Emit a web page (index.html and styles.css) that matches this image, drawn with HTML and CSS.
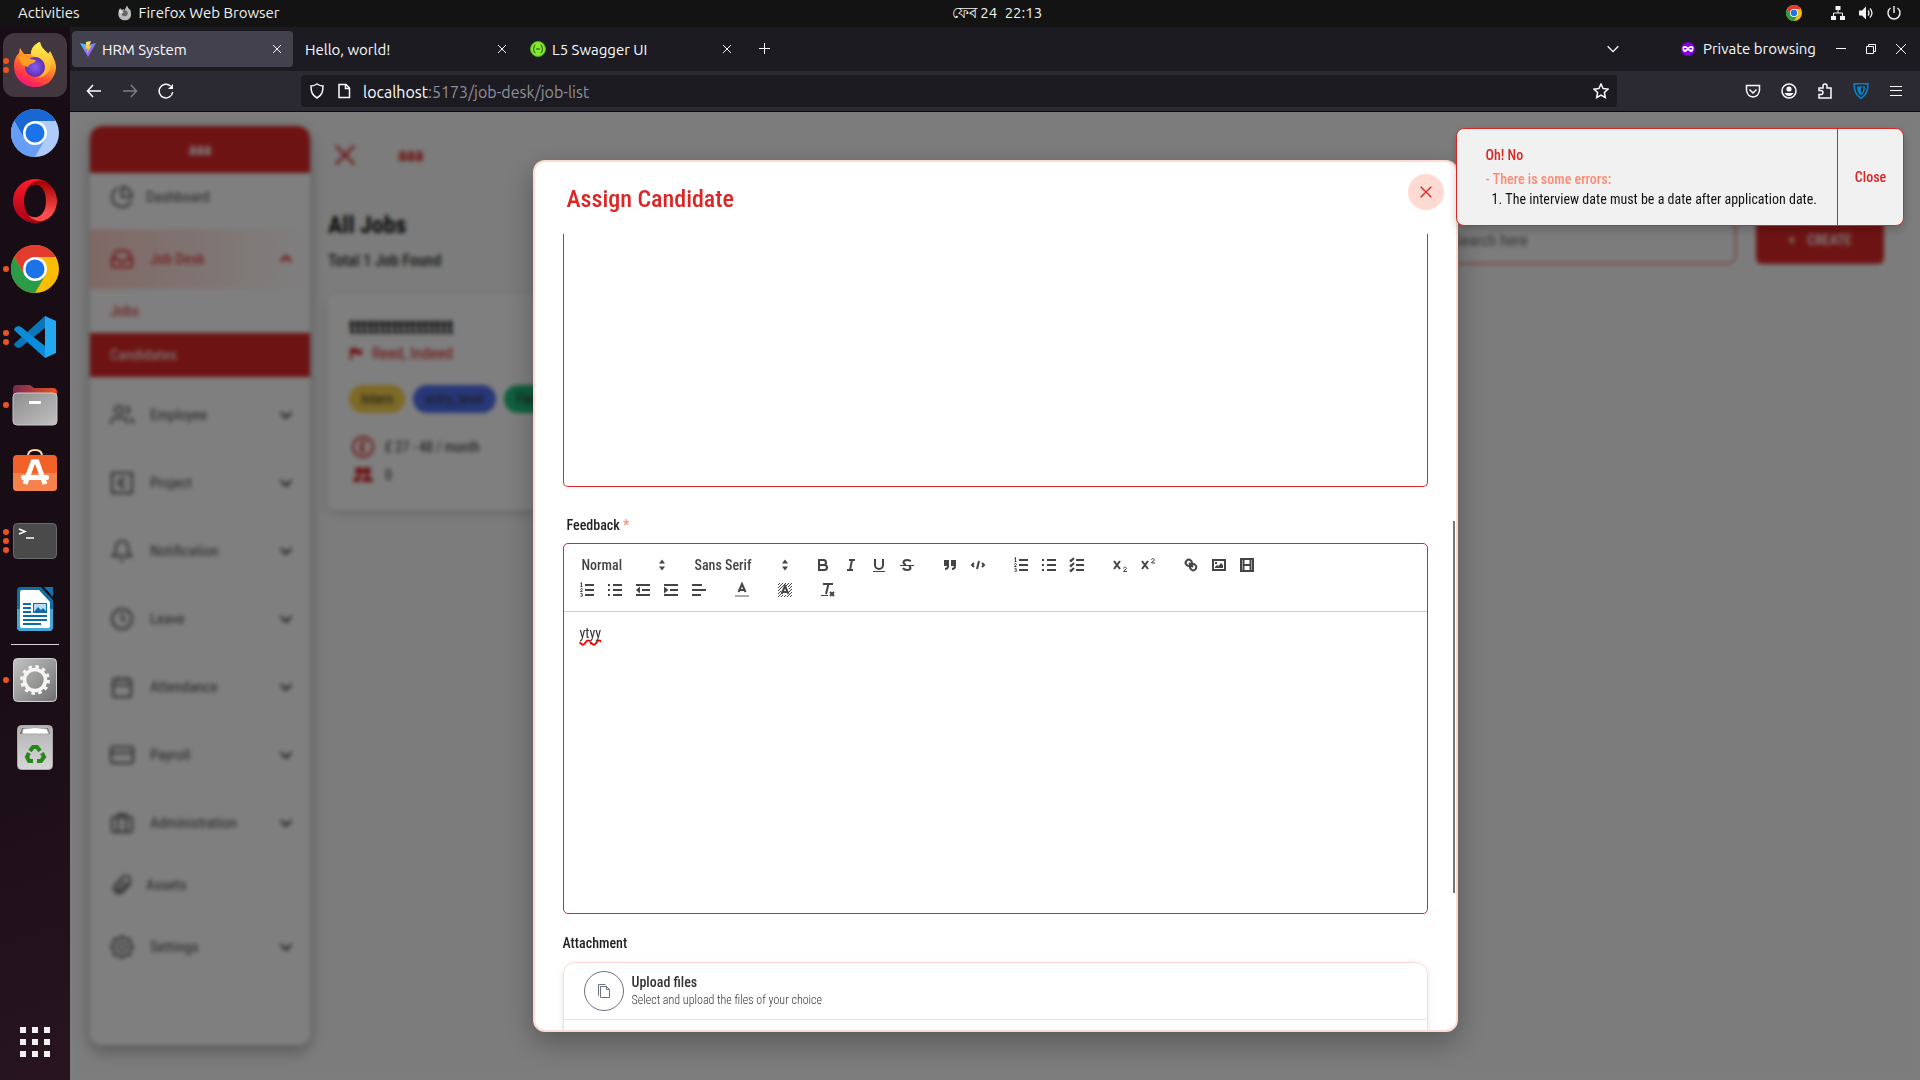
FILE: index.html
```html
<!DOCTYPE html>
<html lang="en">
<head>
<meta charset="utf-8">
<title>HRM System</title>
<meta name="viewport" content="width=device-width, initial-scale=1">
<link rel="stylesheet" href="styles.css">
</head>
<body>
<svg class="defs" aria-hidden="true">
  <defs>
    <linearGradient id="ffBody" x1="0.8" y1="0" x2="0.3" y2="1"><stop offset="0" stop-color="#fff44f"/><stop offset=".35" stop-color="#ffb02e"/><stop offset=".6" stop-color="#ff6a2b"/><stop offset=".85" stop-color="#ff2d52"/><stop offset="1" stop-color="#e31587"/></linearGradient>
    <linearGradient id="ffFlame" x1="0" y1="0" x2="0" y2="1"><stop offset="0" stop-color="#fff150"/><stop offset="1" stop-color="#ffa62a"/></linearGradient>
    <radialGradient id="ffGlobe"><stop offset="0" stop-color="#8a5cf5"/><stop offset="1" stop-color="#5b2fb0"/></radialGradient>
    <linearGradient id="opA" x1="0" y1="0" x2="0" y2="1"><stop offset="0" stop-color="#ff1b2d"/><stop offset="1" stop-color="#a70014"/></linearGradient>
    <linearGradient id="opB" x1="0" y1="0" x2="0" y2="1"><stop offset="0" stop-color="#9c0000"/><stop offset=".8" stop-color="#ff4b4b"/></linearGradient>
    <linearGradient id="folder" x1="0" y1="0" x2="1" y2="1"><stop offset="0" stop-color="#8e8e8e"/><stop offset="1" stop-color="#c0c0c0"/></linearGradient>
    <linearGradient id="folderBack" x1="0" y1="0" x2="1" y2="0"><stop offset="0" stop-color="#772953"/><stop offset="1" stop-color="#e95420"/></linearGradient>
    <linearGradient id="gear" x1="0" y1="0" x2="1" y2="1"><stop offset="0" stop-color="#c4c4c4"/><stop offset="1" stop-color="#707070"/></linearGradient>
    <linearGradient id="trash" x1="0" y1="0" x2="0" y2="1"><stop offset="0" stop-color="#b4b4b4"/><stop offset="1" stop-color="#d6d6d6"/></linearGradient>
    <linearGradient id="viteA" x1="0" y1="0" x2="1" y2="1"><stop offset="0" stop-color="#41d1ff"/><stop offset="1" stop-color="#bd34fe"/></linearGradient>
    <linearGradient id="viteB" x1="0" y1="0" x2="0" y2="1"><stop offset="0" stop-color="#ffea83"/><stop offset="1" stop-color="#ffa800"/></linearGradient>
    <symbol id="i-x" viewBox="0 0 24 24"><path d="M4 4l16 16M20 4L4 20"/></symbol>
    <symbol id="i-down" viewBox="0 0 24 24"><path d="M4 8l8 8 8-8"/></symbol>
    <symbol id="i-chrome" viewBox="0 0 48 48">
      <circle cx="24" cy="24" r="24" fill="#fbbc04"/>
      <path d="M3.2 12A24 24 0 0 1 44.8 12H24L13.6 30z" fill="#e33b2e"/>
      <path d="M3.2 12A24 24 0 0 0 24 48L34.4 30 24 36 13.6 30z" fill="#2a9b48"/>
      <circle cx="24" cy="24" r="12" fill="#fff"/><circle cx="24" cy="24" r="9.500" fill="#1a73e8"/>
    </symbol>
    <symbol id="q-ordered" viewBox="0 0 18 18"><path d="M7 4h9M7 9h9M7 14h9"/><path class="thin" d="M2.500 5.500h2M3.500 5.500v-4l-1 1"/><path class="thin" d="M2.500 8.500c0-1.500 2-1.200 2 0 0 .7-2 1.200-2 2h2M2.500 12.700c.8-.6 2-.3 2 .4 0 .5-.6.7-1 .7.6 0 1.200.3 1.200.9 0 .8-1.400 1-2.200.4"/></symbol>
    <symbol id="q-bullet" viewBox="0 0 18 18"><path d="M7 4h9M7 9h9M7 14h9M2 4h2M2 9h2M2 14h2"/></symbol>
  </defs>
</svg>

<header class="topbar">
  <div class="topbar-left">
    <button class="plain">Activities</button>
    <button class="plain app-name">
      <svg width="16" height="16" viewBox="0 0 44 48"><path d="M22 46C9 46 1 36 2 24c.5-5 2-8 4-10l1-5 5 5 7-1 2 4c2-8 4-12 8-15 1 5 4 8 7 12 2-2 3 4 4 10C42 37 34 46 22 46z" fill="#bbb"/><circle cx="21" cy="25" r="9" fill="#666"/><path d="M3 13q8 3 15 9-7 7-12 3z" fill="#ddd"/></svg>
      Firefox Web Browser
    </button>
  </div>
  <time class="clock">ফেব 24&ensp;22:13</time>
  <div class="tray">
    <svg class="tray-chrome" width="16" height="16"><use href="#i-chrome"/></svg>
    <svg width="16" height="16" viewBox="0 0 16 16" fill="#f2f2f2"><path d="M5.500 1h5v4h-5zM1 11h5v4H1zM10 11h5v4h-5z"/><path d="M8 5v3M3.500 11V8h9v3" fill="none" stroke="#f2f2f2"/></svg>
    <svg width="16" height="16" viewBox="0 0 16 16" fill="#f2f2f2"><path d="M1 5.500h3l4-4v13l-4-4H1z"/><path d="M10 5.500q2 2.500 0 5M12 3.500q4 4.500 0 9" fill="none" stroke="#f2f2f2" stroke-width="1.300"/></svg>
    <svg width="16" height="16" viewBox="0 0 16 16" fill="none" stroke="#f2f2f2" stroke-width="1.400"><path d="M8 1v7M4.600 3a6 6 0 1 0 6.800 0"/></svg>
  </div>
</header>

<div class="desktop">
  <nav class="dock" aria-label="Dock">
    <button class="dock-item active" aria-label="Firefox"><span class="dots"><i></i><i></i></span>
      <svg width="44" height="46" viewBox="0 0 44 46"><path d="M22 45C9 45 1 35 1 24 1 18 3 14 6 11l1-5 4 6 7 0c0-6 4-10 9-12 1 6 4 9 8 12l2-3c4 7 6 12 6 17-1 11-9 19-21 19z" fill="url(#ffBody)"/><path d="M27 0c1 7 8 9 10 15 4 13-4 20-12 21 9-7 7-15 2-19-5-3-7-2-9-5 0-6 4-10 9-12z" fill="url(#ffFlame)"/><circle cx="22" cy="25" r="10" fill="url(#ffGlobe)"/><path d="M6 14q7-2 11 3l6 1c-1 4-7 3-8 7-5-1-9-4-9-11z" fill="#ff9f22"/></svg>
    </button>
    <button class="dock-item" aria-label="Chromium">
      <svg width="48" height="48" viewBox="0 0 48 48"><circle cx="24" cy="24" r="24" fill="#aecbfa"/><path d="M3.200 12A24 24 0 0 1 44.800 12H24L13.600 30z" fill="#1967d2"/><path d="M3.200 12A24 24 0 0 0 24 48L34.400 30 24 36 13.600 30z" fill="#669df6"/><circle cx="24" cy="24" r="12" fill="#fff"/><circle cx="24" cy="24" r="9.500" fill="#1a73e8"/></svg>
    </button>
    <button class="dock-item" aria-label="Opera">
      <svg width="44" height="44" viewBox="0 0 44 44"><path d="M22 0a22 22 0 1 0 0 44 22 22 0 0 0 14-5c-12 7-25-1-25-17S24-2 36 5A22 22 0 0 0 22 0z" fill="url(#opA)"/><path d="M15 8c6-8 14-8 21-3a22 22 0 0 1 0 34c-7 5-15 4-21-3 10 6 18-1 18-14S25 2 15 8z" fill="url(#opB)"/></svg>
    </button>
    <button class="dock-item" aria-label="Chrome"><span class="dots"><i></i></span>
      <svg width="48" height="48"><use href="#i-chrome"/></svg>
    </button>
    <button class="dock-item" aria-label="Visual Studio Code"><span class="dots"><i></i><i></i></span>
      <svg width="42" height="42" viewBox="0 0 42 42"><path d="M31 0L1 27q-2 2 1 4l2 1q1 0 3-1L31 12z" fill="#0876b9"/><path d="M31 42L1 15q-2-2 1-4l2-1q1 0 3 1l24 19z" fill="#0b8bd9"/><path d="M31 0l11 5v32l-11 5z" fill="#25a8f2"/></svg>
    </button>
    <button class="dock-item" aria-label="Files"><span class="dots"><i></i></span>
      <svg width="46" height="42" viewBox="0 0 46 42"><path d="M1 5q0-4 4-4h13l4 3h19q4 0 4 4v8H1z" fill="url(#folderBack)"/><rect x="1" y="9" width="44" height="32" rx="4" fill="url(#folder)" stroke="#c9c9c9"/><rect x="17" y="17" width="12" height="3" rx="1" fill="#fff"/></svg>
    </button>
    <button class="dock-item" aria-label="Ubuntu Software">
      <svg width="44" height="48" viewBox="0 1 44 48"><path d="M15 10V8q0-6 7-6t7 6v2" fill="none" stroke="#f7dca8" stroke-width="2"/><rect y="7" width="44" height="36" rx="4" fill="#f26128"/><path d="M0 25h44v14q0 4-4 4H4q-4 0-4-4z" fill="#f5824d"/><path d="M12 36l8-22h4l8 22" fill="none" stroke="#fff" stroke-width="5"/><rect x="8" y="27" width="28" height="5" rx="2" fill="#fff"/></svg>
    </button>
    <button class="dock-item" aria-label="Terminal"><span class="dots"><i></i><i></i><i></i></span>
      <svg width="44" height="36" viewBox="0 0 44 36"><rect x=".5" y=".5" width="43" height="35" rx="4" fill="#4a4a4a" stroke="#6b6b6b"/><path d="M6 6l6 2.500L6 11M13 15h8" fill="none" stroke="#fff" stroke-width="1.600"/></svg>
    </button>
    <button class="dock-item" aria-label="LibreOffice Writer">
      <svg width="36" height="44" viewBox="0 0 36 44"><path d="M4 0h20l12 13v27q0 4-4 4H4q-4 0-4-4V4q0-4 4-4z" fill="#0e6ea6"/><path d="M0 22h36v18q0 4-4 4H4q-4 0-4-4z" fill="#45a7d8"/><path d="M5 3h17l11 12v24q0 2-2 2H5q-2 0-2-2V5q0-2 2-2z" fill="#fff"/><path d="M27 0h9v10z" fill="#1175ae"/><path d="M6 17h8M6 21h8M6 25h8M6 29h24M6 33h24M6 37h18" stroke="#0b6cab" stroke-width="2"/><rect x="16.500" y="16.500" width="13" height="9" fill="#b8dcf2" stroke="#0b6cab"/><path d="M17 25l4-5 3 3 2-2 4 4z" fill="#0b6cab"/></svg>
    </button>
    <hr class="dock-rule">
    <button class="dock-item" aria-label="Settings"><span class="dots"><i></i></span>
      <svg width="44" height="44" viewBox="0 0 44 44"><rect x=".5" y=".5" width="43" height="43" rx="4" fill="url(#gear)" stroke="#d2d2d2"/><circle cx="22" cy="22" r="10.500" fill="none" stroke="#f5f5f2" stroke-width="3.600"/><circle cx="22" cy="22" r="13.400" fill="none" stroke="#f5f5f2" stroke-width="3" stroke-dasharray="3.500 3.515"/></svg>
    </button>
    <button class="dock-item" aria-label="Trash">
      <svg width="36" height="46" viewBox="0 0 36 46"><rect x=".5" y=".5" width="35" height="44" rx="4" fill="url(#trash)" stroke="#a8a8a8"/><path d="M3 9l2-6h26l2 6z" fill="#666"/><path d="M5 9l1-5q12-3 24 0l2 5z" fill="#fff" stroke="#aaa"/><g fill="none" stroke="#26871d" stroke-width="4"><path d="M13 26l3-4h4l3 4"/><path d="M25 28l2 4-3 4h-4"/><path d="M16 36h-4l-2-4 2-4"/></g></svg>
    </button>
    <button class="dock-item apps" aria-label="Show applications">
      <svg width="30" height="30" viewBox="0 0 30 30" fill="#f2f2f2"><path d="M0 0h6v6H0zM12 0h6v6h-6zM24 0h6v6h-6zM0 12h6v6H0zM12 12h6v6h-6zM24 12h6v6h-6zM0 24h6v6H0zM12 24h6v6h-6zM24 24h6v6h-6z"/></svg>
    </button>
  </nav>

  <div class="browser">
    <div class="tabs">
      <div class="tab current">
        <svg width="16" height="16" viewBox="0 0 16 16"><path d="M0 2l8 14 8-14-8 2z" fill="url(#viteA)"/><path d="M11 0L6 1 5.500 8 7.500 7.500 7 12l4.500-7-2.500.5z" fill="url(#viteB)"/></svg>
        <span class="tab-name">HRM System</span>
        <button class="plain" aria-label="Close tab"><svg class="line" width="12" height="12"><use href="#i-x"/></svg></button>
      </div>
      <div class="tab">
        <span class="tab-name">Hello, world!</span>
        <button class="plain" aria-label="Close tab"><svg class="line" width="12" height="12"><use href="#i-x"/></svg></button>
      </div>
      <div class="tab">
        <svg width="16" height="16" viewBox="0 0 16 16"><circle cx="8" cy="8" r="7.500" fill="#85ea2d" stroke="#4fae1e"/><path d="M5.500 4Q4 4 4 6t-1 2q1 0 1 2t1.500 2M10.500 4Q12 4 12 6t1 2q-1 0-1 2t-1.500 2M6 8h4" fill="none" stroke="#1d4a1a"/></svg>
        <span class="tab-name">L5 Swagger UI</span>
        <button class="plain" aria-label="Close tab"><svg class="line" width="12" height="12"><use href="#i-x"/></svg></button>
      </div>
      <button class="plain new-tab" aria-label="New tab"><svg width="12" height="12" viewBox="0 0 12 12" stroke="#fbfbfe"><path d="M5.500 0v11M0 5.500h11"/></svg></button>
      <div class="window-tools">
        <button class="plain all-tabs" aria-label="List all tabs"><svg class="line" width="16" height="16"><use href="#i-down"/></svg></button>
        <span class="private">
          <svg width="14" height="14" viewBox="0 0 14 14"><circle cx="7" cy="7" r="7" fill="#8000d7"/><path d="M1.500 5q2.500-2 5.500.5Q10 3 12.500 5q.3 5-2.500 5-1.500 0-3-2-1.500 2-3 2Q1.200 10 1.500 5z" fill="#fff"/><path d="M3 6.700h2.500M8.500 6.700H11" stroke="#8000d7" stroke-width="1.500"/></svg>
          Private browsing
        </span>
        <button class="plain" aria-label="Minimize"><svg width="10" height="10" viewBox="0 0 10 10" stroke="#fbfbfe"><path d="M0 4.500h10"/></svg></button>
        <button class="plain" aria-label="Restore"><svg width="10" height="10" viewBox="0 0 10 10" stroke="#fbfbfe" fill="none"><path d="M.5 2.500h7v7h-7zM2.500 2V.5h7v7H8"/></svg></button>
        <button class="plain" aria-label="Close window"><svg width="10" height="10" viewBox="0 0 10 10" stroke="#fbfbfe"><path d="M0 0l10 10M10 0L0 10"/></svg></button>
      </div>
    </div>
    <div class="navbar">
      <div class="nav-group">
        <button class="plain" aria-label="Back"><svg class="nav" viewBox="0 0 16 16"><path d="M15 8H1.500M7 2L1.500 8 7 14"/></svg></button>
        <button class="plain faded" aria-label="Forward"><svg class="nav" viewBox="0 0 16 16"><path d="M1 8h13.500M9 2l5.500 6L9 14"/></svg></button>
        <button class="plain" aria-label="Reload"><svg class="nav" viewBox="0 0 16 16"><path d="M12.500 3A6.800 6.800 0 1 0 14.700 9"/><path d="M15 1v5h-5z" fill="#fbfbfe" stroke="none"/></svg></button>
      </div>
      <div class="urlbar">
        <svg class="nav" viewBox="0 0 16 16"><path d="M8 1q3 2 6 2c0 6-1 9-6 12C3 12 2 9 2 3q3 0 6-2z"/></svg>
        <svg class="nav" viewBox="0 0 16 16"><path d="M3 1.500h7L13.500 5v9.500H3zM9.500 1.500v4h4"/></svg>
        <span class="url"><b>localhost</b>:5173/job-desk/job-list</span>
        <button class="plain" aria-label="Bookmark"><svg class="nav" viewBox="0 0 16 16"><path d="M8 1l2.100 4.500 4.900.6-3.600 3.400.9 5L8 12.100l-4.300 2.400.9-5L1 6.100l4.900-.6z"/></svg></button>
      </div>
      <div class="nav-group tools">
        <button class="plain" aria-label="Pocket"><svg class="nav" viewBox="0 0 16 16"><path d="M1.500 2.500h13v5q-1 6-6.500 6.500-5.500-.5-6.500-6.500zM4.500 6.500L8 10l3.500-3.500"/></svg></button>
        <button class="plain" aria-label="Account"><svg class="nav" viewBox="0 0 16 16"><circle cx="8" cy="8" r="7"/><circle cx="8" cy="6" r="2.600" fill="#fbfbfe" stroke="none"/><path d="M3.500 10h9q-1.500 3-4.500 3t-4.500-3z" fill="#fbfbfe" stroke="none"/></svg></button>
        <button class="plain" aria-label="Extensions"><svg class="nav" viewBox="0 0 16 16"><path d="M2 15V11.500q4 .5 4-2t-4-2V5h4V3q0-2 2-2t2 2v2h4v10z"/></svg></button>
        <button class="plain" aria-label="Shield"><svg width="16" height="16" viewBox="0 0 16 16"><path d="M1 1q7-1 14 0 0 10-7 14.500Q1 11 1 1z" fill="none" stroke="#0a84c8" stroke-width="1.500"/><path d="M4 3.500h8q0 6-4 9-4-3-4-9z" fill="#0a84c8"/><path d="M8 4.500h2.500q0 4-2.500 6z" fill="#1c1b22"/></svg></button>
        <button class="plain" aria-label="Menu"><svg width="14" height="14" viewBox="0 0 14 14" stroke="#fbfbfe"><path d="M1 2.500h12M1 6.500h12M1 11.500h12"/></svg></button>
      </div>
    </div>

    <div class="page">
      <aside class="sidebar">
        <div class="brand">aaa</div>
        <nav class="menu">
          <a class="item single" href="#"><svg viewBox="0 0 24 24"><path d="M21.200 15.900A10 10 0 1 1 8 2.800M22 12A10 10 0 0 0 12 2v10z"/></svg>Dashboard</a>
          <div class="group">
            <a class="item open" href="#"><svg viewBox="0 0 24 24"><path d="M22 12h-6l-2 3h-4l-2-3H2M5.500 5L2 12v6a2 2 0 0 0 2 2h16a2 2 0 0 0 2-2v-6l-3.500-7a2 2 0 0 0-1.800-1H7.300a2 2 0 0 0-1.800 1z"/></svg>Job Desk<svg class="chev up" viewBox="0 0 24 24"><use href="#i-down"/></svg></a>
            <a class="sub" href="#">Jobs</a>
            <a class="sub selected" href="#">Candidates</a>
          </div>
          <a class="item" href="#"><svg viewBox="0 0 24 24"><path d="M17 21v-2a4 4 0 0 0-4-4H5a4 4 0 0 0-4 4v2M23 21v-2a4 4 0 0 0-3-3.900M16 3.100a4 4 0 0 1 0 7.800"/><circle cx="9" cy="7" r="4"/></svg>Employee<svg class="chev" viewBox="0 0 24 24"><use href="#i-down"/></svg></a>
          <a class="item" href="#"><svg viewBox="0 0 24 24"><path d="M2 2h20v20H2zM15.500 9a4 4 0 1 0 0 6M9 12h4"/></svg>Project<svg class="chev" viewBox="0 0 24 24"><use href="#i-down"/></svg></a>
          <a class="item" href="#"><svg viewBox="0 0 24 24"><path d="M18 8A6 6 0 0 0 6 8c0 7-3 9-3 9h18s-3-2-3-9M13.700 21a2 2 0 0 1-3.400 0"/></svg>Notification<svg class="chev" viewBox="0 0 24 24"><use href="#i-down"/></svg></a>
          <a class="item" href="#"><svg viewBox="0 0 24 24"><circle cx="12" cy="12" r="10"/><path d="M12 6v6l4 2"/></svg>Leave<svg class="chev" viewBox="0 0 24 24"><use href="#i-down"/></svg></a>
          <a class="item" href="#"><svg viewBox="0 0 24 24"><rect x="3" y="4" width="18" height="18" rx="2"/><path d="M16 2v4M8 2v4M3 10h18"/></svg>Attendance<svg class="chev" viewBox="0 0 24 24"><use href="#i-down"/></svg></a>
          <a class="item" href="#"><svg viewBox="0 0 24 24"><rect x="1" y="4" width="22" height="16" rx="2"/><path d="M1 10h22"/></svg>Payroll<svg class="chev" viewBox="0 0 24 24"><use href="#i-down"/></svg></a>
          <a class="item" href="#"><svg viewBox="0 0 24 24"><rect x="2" y="6" width="20" height="15" rx="2"/><path d="M8 21V5a2 2 0 0 1 2-2h4a2 2 0 0 1 2 2v16"/></svg>Administration<svg class="chev" viewBox="0 0 24 24"><use href="#i-down"/></svg></a>
          <a class="item single" href="#"><svg viewBox="0 0 24 24"><path d="M20 11l-8 8a5 5 0 0 1-7-7l8-8a4 4 0 0 1 6 6l-8 8a2 2 0 0 1-3-3l7-7"/></svg>Assets</a>
          <a class="item" href="#"><svg viewBox="0 0 24 24"><path d="M12 1l3 3h5v5l3 3-3 3v5h-5l-3 3-3-3H4v-5l-3-3 3-3V4h5z"/><circle cx="12" cy="12" r="4"/></svg>Settings<svg class="chev" viewBox="0 0 24 24"><use href="#i-down"/></svg></a>
        </nav>
      </aside>

      <main class="main">
        <div class="main-head">
          <button class="plain" aria-label="Collapse menu"><svg width="28" height="28" viewBox="0 0 24 24" fill="none" stroke="#dc2626" stroke-width="2"><use href="#i-x"/></svg></button>
          <strong>aaa</strong>
        </div>
        <div class="list-head">
          <div><h1>All Jobs</h1><p>Total 1 Job Found</p></div>
          <div class="actions">
            <input class="search" type="search" placeholder="Search here" aria-label="Search jobs">
            <button class="create"><span>+</span>CREATE</button>
          </div>
        </div>
        <div class="jobs">
          <article class="job">
            <h2>ttttttttttttttttt</h2>
            <p class="source"><svg width="14" height="14" viewBox="0 0 14 14" fill="#dc2626"><path d="M1 1h2v12H1zM3 1q3-1 5 1t5 0v6q-3 1-5-1T3 8z"/></svg>Reed, Indeed</p>
            <div class="tags"><span class="tag intern">Intern</span><span class="tag level">entry_level</span><span class="tag flex">Flexible</span></div>
            <p class="fact"><svg viewBox="0 0 24 24" fill="none" stroke="#dc2626" stroke-width="2"><circle cx="12" cy="12" r="10"/><path d="M15 8q-1-2-3-1.500T10.500 10v4q0 2-1.500 2.500h6M8.500 12h5"/></svg>£ 27 - 48 / month</p>
            <p class="fact"><svg viewBox="0 0 24 24" fill="#dc2626"><circle cx="8" cy="8" r="4"/><circle cx="16" cy="8" r="4"/><path d="M2 19q0-6 6-6 2 0 3 1-2 1-2 5zM11 19q0-6 5-6 6 0 6 6z"/></svg>0</p>
          </article>
        </div>
      </main>

      <div class="overlay">
        <section class="modal" role="dialog" aria-label="Assign Candidate">
          <header class="modal-head">
            <h2>Assign Candidate</h2>
            <button class="close" aria-label="Close dialog"><svg width="16" height="16" viewBox="0 0 24 24" fill="none" stroke="#dc2626" stroke-width="2"><use href="#i-x"/></svg></button>
          </header>
          <form class="modal-body">
            <textarea class="tail" aria-label="Description"></textarea>
            <label class="label inset" for="feedback">Feedback <em>*</em></label>
            <div class="editor">
              <div class="toolbar">
                <div class="set">
                  <span class="picker"><select aria-label="Heading"><option>Normal</option></select><svg viewBox="0 0 18 18"><path d="M6 10.500h6l-3 4zM6 7.500h6l-3-4z"/></svg></span>
                </div>
                <div class="set">
                  <span class="picker wide"><select aria-label="Font"><option>Sans Serif</option></select><svg viewBox="0 0 18 18"><path d="M6 10.500h6l-3 4zM6 7.500h6l-3-4z"/></svg></span>
                </div>
                <div class="set">
                  <button type="button" aria-label="Bold"><svg viewBox="0 0 18 18"><path d="M5 4h4.500a2.500 2.500 0 0 1 0 5H5zM5 9h5.500a2.500 2.500 0 0 1 0 5H5z"/></svg></button>
                  <button type="button" aria-label="Italic"><svg viewBox="0 0 18 18"><path d="M7 4h6M5 14h6M8 14l2-10"/></svg></button>
                  <button type="button" aria-label="Underline"><svg viewBox="0 0 18 18"><path d="M5 3v6a4 4 0 0 0 8 0V3"/><path class="thin" d="M3 15.500h12"/></svg></button>
                  <button type="button" aria-label="Strike"><svg viewBox="0 0 18 18"><path class="thin" d="M2 9.500h14"/><path d="M12.500 5.500Q12 4 9 4 5.500 4 5.500 6.500q0 1.500 2.500 2.200M11 10q1.500.8 1.500 2 0 2-3.500 2-3 0-4-2"/></svg></button>
                </div>
                <div class="set">
                  <button type="button" aria-label="Quote"><svg viewBox="0 0 18 18"><path class="solid" d="M3 4h5v6q0 4-4 4v-2q2 0 2-2H3zM10 4h5v6q0 4-4 4v-2q2 0 2-2h-3z"/></svg></button>
                  <button type="button" aria-label="Code"><svg viewBox="0 0 18 18"><path d="M5 7L3 9l2 2M13 7l2 2-2 2M10 5L8 13"/></svg></button>
                </div>
                <div class="set">
                  <button type="button" aria-label="Ordered list"><svg><use href="#q-ordered"/></svg></button>
                  <button type="button" aria-label="Bullet list"><svg><use href="#q-bullet"/></svg></button>
                  <button type="button" aria-label="Check list"><svg viewBox="0 0 18 18"><path d="M8 4h8M8 9h8M8 14h8M2 4l1 1 3-3M2 9l1 1 3-3M2 14l1 1 3-3"/></svg></button>
                </div>
                <div class="set">
                  <button type="button" aria-label="Subscript"><svg viewBox="0 0 18 18"><path d="M3 5l6 8M9 5l-6 8"/><path class="thin" d="M12.500 12.500c0-2 3-1.500 3 0 0 1-3 1.500-3 3H16"/></svg></button>
                  <button type="button" aria-label="Superscript"><svg viewBox="0 0 18 18"><path d="M3 5l6 8M9 5l-6 8"/><path class="thin" d="M12.500 4c0-2 3-1.500 3 0 0 1-3 1.500-3 3H16"/></svg></button>
                </div>
                <div class="set">
                  <button type="button" aria-label="Link"><svg viewBox="0 0 18 18"><path d="M7 7l4 4M8.900 4.600a2.800 2.800 0 1 0-4.300 4.300 2.800 2.800 0 0 0 4 .3 2.800 2.800 0 0 0 .3-4.600zM13.400 9.100a2.800 2.800 0 1 0-4.300 4.300 2.800 2.800 0 0 0 4.300-4.300z"/></svg></button>
                  <button type="button" aria-label="Image"><svg viewBox="0 0 18 18"><path d="M3 4h12v10H3z"/><path class="solid" d="M5 12v-1l2-2 1.500 1L11 7l2 2v3zM5 6h2v2H5z"/></svg></button>
                  <button type="button" aria-label="Video"><svg viewBox="0 0 18 18"><path d="M3 3h12v12H3zM5.500 3v12M12.500 3v12M5.500 9h7"/></svg></button>
                </div>
                <div class="set">
                  <button type="button" aria-label="Ordered list"><svg><use href="#q-ordered"/></svg></button>
                  <button type="button" aria-label="Bullet list"><svg><use href="#q-bullet"/></svg></button>
                  <button type="button" aria-label="Outdent"><svg viewBox="0 0 18 18"><path d="M2 4h14M8 9h8M2 14h14"/><path class="solid" d="M6 5.500v7L2 9z"/></svg></button>
                  <button type="button" aria-label="Indent"><svg viewBox="0 0 18 18"><path d="M2 4h14M8 9h8M2 14h14"/><path class="solid" d="M2 5.500v7L6.500 9z"/></svg></button>
                  <button type="button" aria-label="Align"><svg viewBox="0 0 18 18"><path d="M2 4h10M2 9h14M2 14h9"/></svg></button>
                </div>
                <div class="set">
                  <button type="button" aria-label="Text color"><svg viewBox="0 0 18 18"><path d="M5.500 11L9 3l3.500 8M6.500 9h5"/><path d="M2 15h14" opacity=".45"/></svg></button>
                </div>
                <div class="set">
                  <button type="button" aria-label="Background color"><svg viewBox="0 0 18 18"><path class="thin" d="M2 4l2-2M2 7l5-5M2 10l8-8M2 13l3-3M2 16l3-3M5 16l2-2M8 16l2-2M11 16l5-5M14 16l2-2M10 5l3-3M12 6l4-4M13 8l3-3M13 11l3-3"/><path d="M5.500 13L9 5l3.500 8M6.500 11h5"/></svg></button>
                </div>
                <div class="set">
                  <button type="button" aria-label="Clear formatting"><svg viewBox="0 0 18 18"><path d="M4 3h10M9.500 3L7 13M11 11l4 4M15 11l-4 4"/><path class="thin" d="M2 14.500h7"/></svg></button>
                </div>
              </div>
              <textarea id="feedback" class="text" spellcheck="false">ytyy</textarea>
            </div>
            <label class="label" for="files">Attachment</label>
            <div class="upload">
              <button type="button" id="files" class="upload-row">
                <span class="ring"><svg width="16" height="16" viewBox="0 0 16 16" fill="none" stroke="#6b7280"><path d="M4.500 3.500h6l3 3v8h-9zM10.500 3.500v3h3M2.500 12.500v-11h7"/></svg></span>
                <span><strong>Upload files</strong><small>Select and upload the files of your choice</small></span>
              </button>
            </div>
          </form>
          <div class="thumb"></div>
        </section>

        <div class="toast" role="alert">
          <div class="toast-text">
            <h3>Oh! No</h3>
            <p>- There is some errors:</p>
            <ol><li>The interview date must be a date after application date.</li></ol>
          </div>
          <button class="toast-close">Close</button>
        </div>
      </div>
    </div>
  </div>
</div>
</body>
</html>
```
FILE: styles.css
```css
* { box-sizing: border-box; }
body {
  margin: 0;
  height: 100vh;
  display: flex;
  flex-direction: column;
  overflow: hidden;
  background: #131313;
  color: #fbfbfe;
  font: 15px/20px Ubuntu, "Open Sans", "Noto Sans", sans-serif;
}
h1, h2, h3, p, ol { margin: 0; }
a { color: inherit; text-decoration: none; }
button, input, select, textarea { font: inherit; color: inherit; }
svg { flex: none; display: block; }
.defs { position: absolute; width: 0; height: 0; }
.plain { background: none; border: 0; padding: 0; display: flex; align-items: center; justify-content: center; }

/* system bar */
.topbar { height: 27px; flex: none; display: grid; grid-template-columns: 1fr auto 1fr; align-items: center; padding: 0 18px 2px; color: #f2f2f2; }
.topbar-left { display: flex; gap: 37px; }
.app-name { gap: 6px; }
.clock { padding-left: 74px; }
.tray { display: flex; justify-content: flex-end; gap: 12px; }
.tray-chrome { margin-right: 16px; }
.desktop { flex: 1; min-height: 0; display: flex; }

/* dock */
.dock { width: 70px; flex: none; display: flex; flex-direction: column; align-items: center; gap: 4px; padding: 6px 0 6px; background: linear-gradient(160deg, #190d15 60%, #27141f); }
.dock-item { position: relative; width: 64px; height: 64px; border: 0; border-radius: 12px; padding: 0; background: none; display: flex; align-items: center; justify-content: center; }
.dock-item.active { background: #43373f; }
.dock-rule { width: 48px; border: 0; height: 1px; background: #d8d4d6; margin: -1px 0; }
.dock-item.apps { margin-top: auto; }
.dots { position: absolute; left: 0; top: 0; height: 100%; display: flex; flex-direction: column; justify-content: center; gap: 3px; }
.dots i { width: 6px; height: 6px; border-radius: 50%; background: #e95420; }

/* browser chrome */
.browser { flex: 1; min-width: 0; display: flex; flex-direction: column; }
.tabs { height: 44px; flex: none; display: flex; align-items: center; gap: 4px; padding: 0 14px 0 2px; background: #1c1b22; }
.tab { width: 221px; height: 36px; border-radius: 4px; padding: 0 10px 0 8px; display: flex; align-items: center; gap: 6px; }
.tab.current { background: #42414d; }
.tab-name { flex: 1; white-space: nowrap; padding-top: 2px; }
.line { fill: none; stroke: #fbfbfe; stroke-width: 2; }
.new-tab { width: 36px; height: 36px; }
.window-tools { margin-left: auto; display: flex; align-items: center; gap: 20px; }
.all-tabs { margin-right: 40px; }
.private { display: flex; align-items: center; gap: 8px; }
.navbar { height: 41px; flex: none; display: flex; align-items: center; background: #2b2a33; border-bottom: 1px solid #0c0c0d; padding: 0 17px 0 16px; }
.nav-group { display: flex; align-items: center; gap: 20px; }
.nav { width: 16px; height: 16px; fill: none; stroke: #fbfbfe; stroke-width: 1.500; }
.faded { opacity: .4; }
.urlbar { flex: 1; max-width: 1316px; height: 32px; margin: 0 auto 0 127px; border-radius: 4px; padding: 0 8px; display: flex; align-items: center; gap: 11px; background: #1c1b22; }
.url { flex: 1; color: #8f8f98; font-size: 16px; padding-top: 2px; }
.url b { font-weight: 400; color: #fbfbfe; }

/* page */
.page { position: relative; flex: 1; min-height: 0; display: flex; gap: 18px; padding: 14px 36px 35px 20px; background: #f9f9f9; color: #333; font: 16px/20px "Roboto Condensed", "Liberation Sans Narrow", Roboto, sans-serif; }
.sidebar { width: 220px; flex: none; display: flex; flex-direction: column; background: #fff; border-radius: 12px; overflow: clip; box-shadow: 0 6px 16px rgba(0, 0, 0, .3); }
.brand { height: 47px; flex: none; display: flex; align-items: center; justify-content: center; background: #dc2626; color: #fff; font-weight: 700; border-radius: 12px 12px 0 0; }
.menu { display: flex; flex-direction: column; gap: 8px; color: #555; font-size: 15px; }
.item { height: 60px; display: flex; align-items: center; gap: 16px; padding: 0 16px 0 20px; }
.item.single { height: 48px; gap: 12px; }
.item svg { width: 24px; height: 24px; fill: none; stroke: currentColor; stroke-width: 2; }
.item .chev { width: 16px; height: 16px; margin-left: auto; stroke-width: 4; }
.chev.up { transform: rotate(180deg); }
.item.open { color: #dc2626; background: linear-gradient(90deg, #ffd2ca, #fff); }
.sub { height: 44px; display: flex; align-items: center; padding-left: 20px; color: #dc2626; }
.sub.selected { background: #dc2626; color: #fff; }
.main { flex: 1; min-width: 0; }
.main-head { height: 58px; display: flex; align-items: center; gap: 39px; padding-left: 3px; color: #dc2626; font-size: 18px; }
.list-head { display: flex; justify-content: space-between; margin-top: 22px; }
.list-head h1 { font-size: 24px; line-height: 38px; color: #111; }
.list-head p { line-height: 34px; font-weight: 500; }
.actions { display: flex; gap: 20px; padding-top: 10px; }
.search { width: 300px; height: 48px; border: 1px solid #dc2626; border-radius: 8px; background: none; padding: 0 16px; }
.create { width: 128px; height: 48px; border: 0; border-radius: 6px; background: #dc2626; color: #fff; font-size: 14px; font-weight: 500; display: flex; align-items: center; justify-content: center; gap: 12px; }
.jobs { display: grid; grid-template-columns: repeat(3, 1fr); gap: 20px; margin-top: 16px; }
.job { background: #fff; border-radius: 8px; padding: 20px 21px; height: 216px; box-shadow: 0 4px 12px rgba(0, 0, 0, .15); }
.job h2 { font-size: 20px; line-height: 26px; color: #111; }
.source { display: flex; align-items: center; gap: 9px; line-height: 28px; color: #dc2626; }
.tags { display: flex; gap: 8px; margin: 17px 0 20px; font-size: 14px; }
.tag { height: 28px; line-height: 28px; border-radius: 14px; padding: 0 12px; }
.intern { background: #fcd34d; }
.level { background: #4f6ff0; }
.flex { background: #20c07c; }
.fact { display: flex; align-items: center; gap: 10px; line-height: 28px; padding-left: 2px; font-size: 14px; }
.fact svg { width: 24px; height: 24px; }

/* dialog */
.overlay { position: absolute; inset: 0; display: flex; align-items: center; justify-content: center; background: rgba(0, 0, 0, .5); backdrop-filter: blur(2px); }
.modal { position: relative; width: 50%; height: 90%; display: flex; flex-direction: column; background: #fff; border: 2px solid #ffdad3; border-radius: 12px; overflow: hidden; box-shadow: 0 10px 30px rgba(0, 0, 0, .3); }
.modal-head { height: 72px; flex: none; display: flex; justify-content: space-between; padding: 12px 12px 0 32px; color: #dc2626; }
.modal-head h2 { font-size: 24px; line-height: 50px; font-weight: 500; }
.close { width: 36px; height: 36px; border: 0; padding: 0; border-radius: 50%; background: #ffdad3; display: flex; align-items: center; justify-content: center; }
.modal-body { flex: 1; min-height: 0; overflow: hidden; display: flex; flex-direction: column; padding: 0 28px; font-size: 14px; }
.modal-body > * { flex: none; }
.tail { display: block; height: 253px; border: 1px solid #dc2626; border-top: 0; border-radius: 0 0 5px 5px; resize: none; background: none; }
.label { font-weight: 500; line-height: 20px; color: #222; }
.label.inset { margin: 28px 0 8px; padding-left: 4px; }
.label em { color: #ff8a73; font-style: normal; }
.editor { height: 371px; display: flex; flex-direction: column; border: 1px solid #dc2626; border-radius: 5px; margin-bottom: 19px; }
.toolbar { display: flex; flex-wrap: wrap; padding: 8px 9px 9px; border-bottom: 1px solid #ccc; }
.set { display: flex; height: 25px; margin-right: 15px; }
.set button { width: 28px; height: 25px; padding: 3px 5px; border: 0; background: none; }
.set svg { width: 18px; height: 18px; fill: none; stroke: #444; stroke-width: 2; }
.set .solid { fill: #444; stroke: none; }
.set .thin, .thin { stroke-width: 1; }
.picker { width: 98px; display: flex; align-items: center; }
.picker.wide { width: 108px; }
.picker select { flex: 1; min-width: 0; appearance: none; border: 0; background: none; padding: 0 0 0 9px; font-weight: 500; color: #444; }
.picker svg { fill: #444; stroke: none; }
.text { flex: 1; border: 0; background: none; resize: none; padding: 12px 16px; line-height: 18px; text-decoration: underline wavy 2px red; text-underline-offset: 1px; text-decoration-skip-ink: none; outline: 0; }
.upload { height: 120px; margin-top: 9px; border: 1px solid #ffdad3; border-radius: 12px; box-shadow: 0 2px 6px rgba(0, 0, 0, .1); }
.upload-row { width: 100%; height: 57px; padding: 0 20px; border: 0; border-bottom: 1px solid #e5e5e5; background: none; display: flex; align-items: center; gap: 8px; text-align: left; }
.upload-row strong, .upload-row small { display: block; line-height: 18px; }
.upload-row strong { font-weight: 500; }
.upload-row small { font-size: 12px; font-weight: 300; }
.ring { width: 40px; height: 40px; border: 1px solid #6b7280; border-radius: 50%; display: flex; align-items: center; justify-content: center; }
.thumb { position: absolute; right: 1px; top: 359px; width: 2px; height: 372px; background: #757575; }

/* notice */
.toast { position: absolute; top: 16px; right: 16px; display: flex; background: #f1f1f1; border: 1px solid #dc2626; border-radius: 8px; font-size: 14px; color: #111; box-shadow: 0 4px 10px rgba(0, 0, 0, .2); }
.toast-text { padding: 16px 20px 16px 29px; }
.toast h3 { font-size: 14px; font-weight: 500; color: #dc2626; margin-bottom: 4px; }
.toast p { font-weight: 500; color: #ff8a73; }
.toast ol { padding-left: 6px; list-style-position: inside; }
.toast-close { width: 66px; border: 0; border-left: 1px solid #dc2626; background: none; padding: 0; color: #dc2626; font-weight: 500; }
```
